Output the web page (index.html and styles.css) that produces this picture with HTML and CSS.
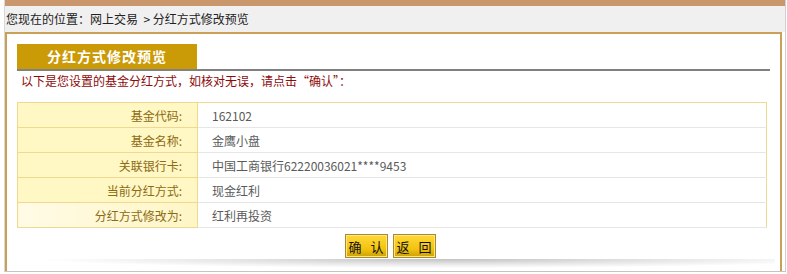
FILE: index.html
```html
<!DOCTYPE html>
<html lang="zh-CN">
    <head>
        <meta charset="UTF-8" />
        <title>分红方式修改预览</title>
        <link rel="stylesheet" href="styles.css">
    </head>
    <body>
        <div class="page">
            <div class="topbar"></div>
            <div class="crumb">您现在的位置：网上交易 &nbsp;&gt; 分红方式修改预览</div>
            <div class="box">
                <div class="tabline">
                    <span class="tab">分红方式修改预览</span>
                </div>
                <div class="tip">以下是您设置的基金分红方式，如核对无误，请点击“确认”：</div>
                <table class="info">
                    <tr>
                        <td class="label">基金代码:</td>
                        <td class="value">162102</td>
                    </tr>
                    <tr>
                        <td class="label">基金名称:</td>
                        <td class="value">金鹰小盘</td>
                    </tr>
                    <tr>
                        <td class="label">关联银行卡:</td>
                        <td class="value">中国工商银行62220036021****9453</td>
                    </tr>
                    <tr>
                        <td class="label">当前分红方式:</td>
                        <td class="value">现金红利</td>
                    </tr>
                    <tr>
                        <td class="label">分红方式修改为:</td>
                        <td class="value">红利再投资</td>
                    </tr>
                </table>
                <div class="actions">
                    <button class="btn">确 认</button>
                    <button class="btn">返 回</button>
                </div>
                <div class="shadow"></div>
            </div>
        </div>
    </body>
</html>
```

FILE: styles.css
```css
* {
    box-sizing: border-box;
}

html,
body {
    margin: 0;
    height: 274px;
    overflow: hidden;
    background: #fff;
    font-family: "Noto Sans CJK SC", "Liberation Sans", sans-serif;
    font-size: 12px;
}

.page {
    margin-left: 4px;
    width: 782px;
    height: 272px;
    border-left: 1px solid #d8d8d8;
    border-right: 1px solid #d0d0d0;
    border-bottom: 1px solid #c4c4c4;
}

.topbar {
    height: 6px;
    background: #c9976b;
}

.crumb {
    height: 26px;
    line-height: 26px;
    padding-left: 1px;
    background: #f1f0f0;
    color: #222;
}

.box {
    margin-right: 3px;
    height: 239px;
    border: 2px solid #c9a055;
    border-bottom: none;
    padding: 10px 10px 0;
}

.tabline {
    width: 753px;
    height: 27px;
    border-bottom: 2px solid #808080;
}

.tab {
    display: block;
    width: 180px;
    height: 25px;
    line-height: 25px;
    background: #cb9a07;
    color: #fff;
    font-size: 14px;
    font-weight: bold;
    letter-spacing: 1px;
    text-align: center;
}

.tip {
    height: 20px;
    line-height: 20px;
    padding-left: 4px;
    color: #8e0b0b;
}

.info {
    margin-top: 11px;
    width: 750px;
    border-collapse: collapse;
    border: 1px solid #f0d98e;
}
.info td {
    height: 25px;
    padding: 0;
}
.info .label {
    width: 180px;
    padding-right: 15px;
    text-align: right;
    color: #8c6a12;
    background: #fff7c4;
    border-right: 1px solid #f0d98e;
    border-bottom: 1px solid #f0d98e;
}
.info tr:last-child .label {
    background: linear-gradient(to right, #fffbe6, #fff6c6);
}
.info .value {
    padding-left: 14px;
    color: #5a5a5a;
    border-bottom: 1px solid #e6e6e6;
}

.actions {
    display: flex;
    justify-content: center;
    gap: 5px;
    width: 750px;
    margin-top: 6px;
    padding-right: 4px;
}

.btn {
    width: 43px;
    height: 24px;
    padding: 0 0 0 3px;
    border: 1px solid #a88a2c;
    box-shadow: inset 0 0 0 1px #ffe680;
    background: linear-gradient(#ffd83a, #f2c20e 65%, #c9a006);
    color: #111;
    font-family: "Noto Sans CJK SC", sans-serif;
    font-size: 13px;
    letter-spacing: 3px;
    cursor: pointer;
}

.shadow {
    margin: 1px 0 0 8px;
    width: 750px;
    height: 9px;
    background: radial-gradient(ellipse 54% 100% at 56% 0, #c2c2c2, #e6e6e6 55%, rgba(255, 255, 255, 0) 100%);
}
```
